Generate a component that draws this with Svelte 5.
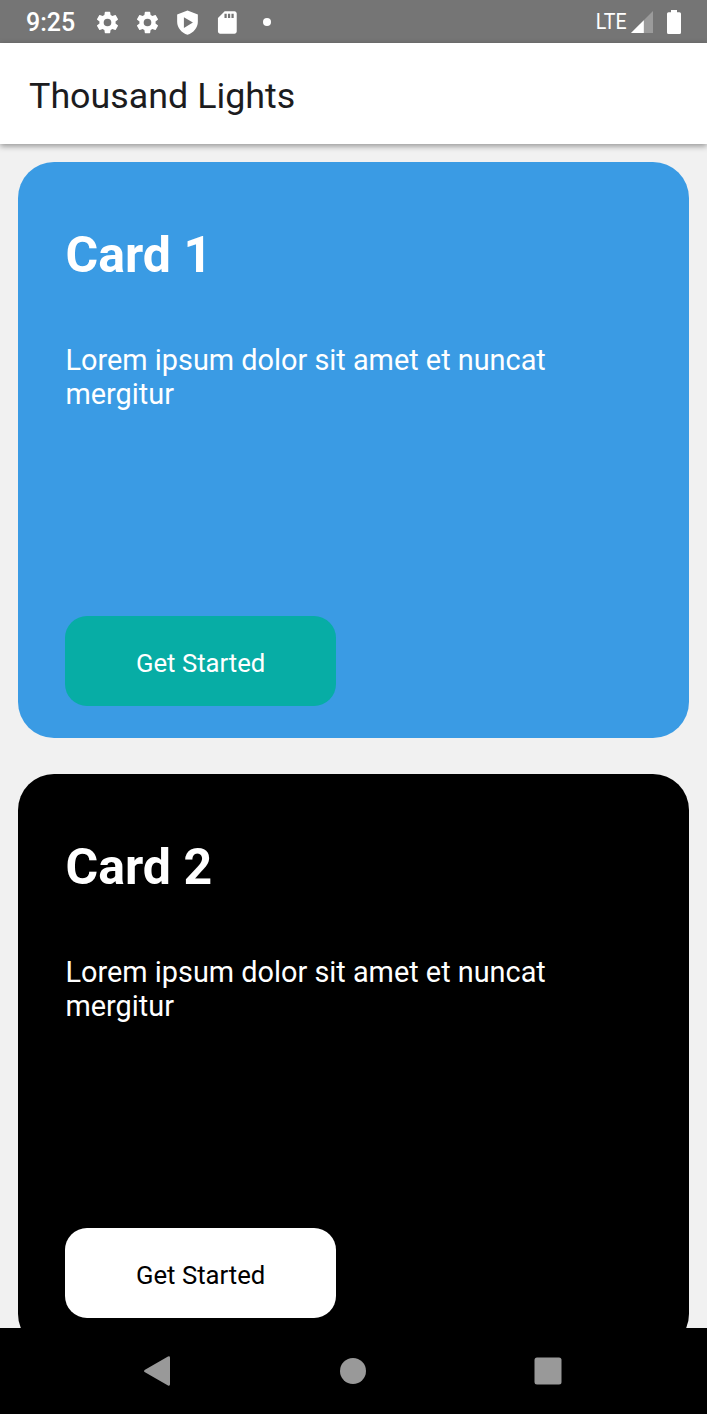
<script>
  const cards = [
    { title: 'Card 1', kind: 'blue' },
    { title: 'Card 2', kind: 'black' }
  ];
  const gear = 'M19.14 12.94c.04-.3.06-.61.06-.94s-.02-.64-.07-.94l2.03-1.58a.49.49 0 0 0 .12-.61l-1.92-3.32a.49.49 0 0 0-.59-.22l-2.39.96a7 7 0 0 0-1.62-.94l-.36-2.54A.48.48 0 0 0 13.92 2.4h-3.84a.48.48 0 0 0-.48.41l-.36 2.54a7.3 7.3 0 0 0-1.62.94l-2.39-.96a.48.48 0 0 0-.59.22L2.72 8.87a.48.48 0 0 0 .12.61l2.03 1.58a7 7 0 0 0 0 1.88l-2.03 1.58a.49.49 0 0 0-.12.61l1.92 3.32c.12.22.37.29.59.22l2.39-.96c.5.38 1.03.7 1.62.94l.36 2.54c.05.24.24.41.48.41h3.84c.24 0 .44-.17.47-.41l.36-2.54a7.3 7.3 0 0 0 1.62-.94l2.39.96c.22.08.47 0 .59-.22l1.92-3.32a.48.48 0 0 0-.12-.61zM12 15.4a3.4 3.4 0 1 1 0-6.8 3.4 3.4 0 0 1 0 6.8z';
</script>

<div class="screen">
  <header class="status">
    <span class="time">9:25</span>
    <svg class="icon" viewBox="0 0 24 24"><path d={gear} /></svg>
    <svg class="icon" viewBox="0 0 24 24"><path d={gear} /></svg>
    <svg class="icon" viewBox="0 0 24 24"><path fill-rule="evenodd" d="M12 1.300 2.800 4.900v6.400c0 5.300 3.900 10 9.200 11.500 5.300-1.500 9.200-6.200 9.200-11.500V4.900zM8.800 7.400v9.400l8-4.700z" /></svg>
    <svg class="icon" viewBox="0 0 24 24"><path fill-rule="evenodd" d="M18.200 2H9.500L3.500 8v12c0 1.100.9 2 2 2h12.700c1.100 0 2-.9 2-2V4c0-1.100-.9-2-2-2zM9.300 4.300h2v3.700h-2zM12.400 4.300h2v3.700h-2zM15.500 4.300h2v3.700h-2z" /></svg>
    <span class="dot"></span>
    <span class="lte">LTE</span>
    <svg class="signal" viewBox="0 0 22 22"><path d="M0 22 22 0v22z" opacity=".28" /><path d="M0 22 12.800 9.200V22z" /></svg>
    <svg class="battery" viewBox="0 0 14 24"><path d="M4 0h6v2.200h2.500q1.500 0 1.500 1.500V22.500q0 1.500-1.500 1.500h-11Q0 24 0 22.500V3.700q0-1.500 1.500-1.500H4z" /></svg>
  </header>
  <div class="appbar"><h1>Thousand Lights</h1></div>
  <main>
    {#each cards as card}
      <section class="card {card.kind}">
        <h2>{card.title}</h2>
        <p>Lorem ipsum dolor sit amet et nuncat mergitur</p>
        <button>Get Started</button>
      </section>
    {/each}
  </main>
  <nav>
    <svg viewBox="0 0 28 30"><path d="M1 13.700 24 .6q2-.8 2 1.200v26.400q0 2-2 1.200L1 16.300q-2-1.300 0-2.600z" /></svg>
    <svg viewBox="0 0 28 30"><circle cx="14" cy="15" r="13" /></svg>
    <svg viewBox="0 0 28 30"><rect x="0.500" y="1.500" width="27" height="27" rx="2.500" /></svg>
  </nav>
</div>

<style>
  :global(body) { margin: 0; }
  .screen { width: 707px; height: 1414px; display: flex; flex-direction: column; overflow: hidden; background: #f1f1f1; font-family: Roboto, sans-serif; }
  .status { box-sizing: border-box; flex: 0 0 43px; display: flex; align-items: center; padding: 0 26px; background: #757575; color: #fff; }
  .time { width: 68px; font-size: 25px; font-weight: 500; line-height: 40px; padding-top: 3px; }
  svg { display: block; flex: none; }
  .status svg { fill: #fff; }
  .icon { width: 27px; height: 27px; margin: 1px 13px 0 0; }
  .dot { width: 8px; height: 8px; margin-left: 9px; border-radius: 50%; background: #fff; }
  .lte { margin-left: auto; font-size: 22px; line-height: 43px; transform: scaleX(.89); transform-origin: right; }
  .signal { width: 22px; height: 22px; margin: 1px 14px 0 4px; }
  .battery { width: 14px; height: 24px; }
  .appbar { box-sizing: border-box; flex: 0 0 101px; display: flex; align-items: center; padding: 4px 29px 0; background: #fff; box-shadow: 0 2px 6px #0006; z-index: 1; }
  h1 { margin: 0; font-size: 35.85px; line-height: 42px; font-weight: 400; color: #1c1c1e; }
  main { flex: 1; min-height: 0; overflow: hidden; padding: 18.4px 17.7px 0 18.3px; display: flex; flex-direction: column; gap: 36px; }
  .card { box-sizing: border-box; flex: 0 0 576px; display: flex; flex-direction: column; align-items: flex-start; padding: 64px 47.2px 32.500px; border-radius: 36px; color: #fff; }
  .blue { background: #3a9be4; }
  .black { background: #000; }
  h2 { margin: 0; font-size: 50px; line-height: 59px; font-weight: 700; }
  p { margin: 58px 0 0; width: 540px; font-size: 28.87px; line-height: 34px; }
  button { width: 270.400px; height: 90px; margin-top: auto; padding: 5px 0 0; border: 0; border-radius: 22px; font: 400 25.7px/30px Roboto, sans-serif; background: #07ada5; color: #fff; }
  .black button { background: #fff; color: #000; }
  nav { box-sizing: border-box; flex: 0 0 86px; display: flex; align-items: center; justify-content: center; gap: 167px; padding-right: 1px; background: #000; }
  nav svg { width: 28px; height: 30px; fill: #999; }
</style>
